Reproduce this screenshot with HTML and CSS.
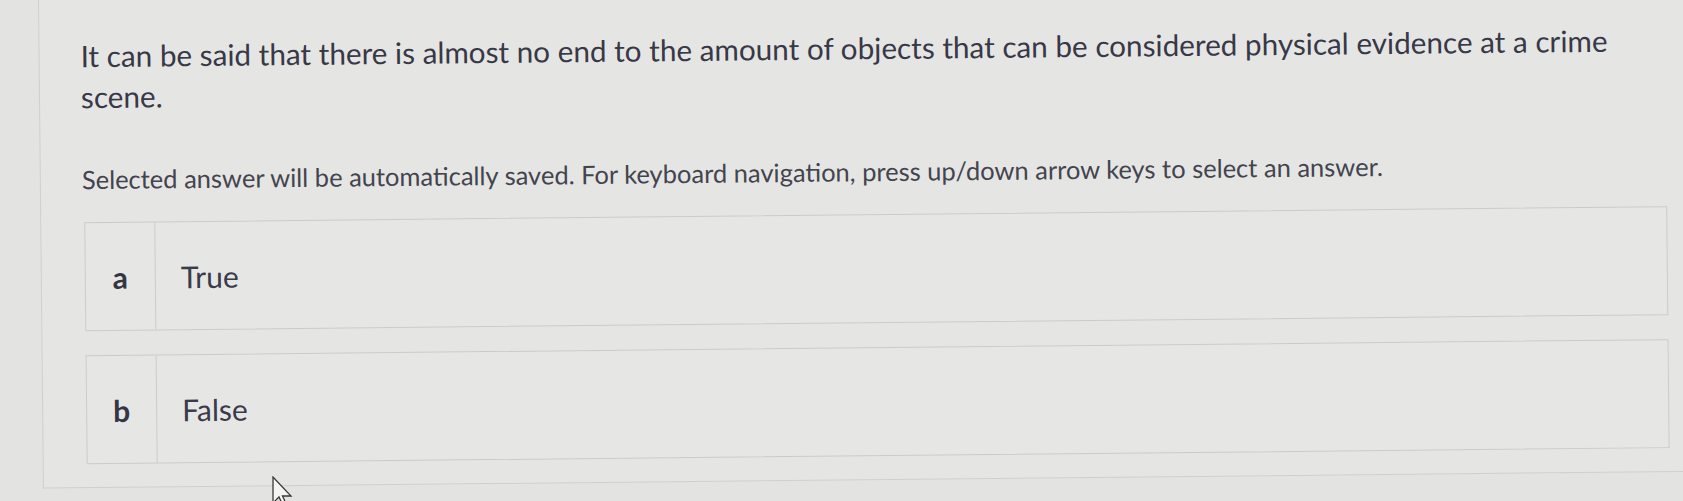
FILE: index.html
```html
<!DOCTYPE html>
<html lang="en">
<head>
<meta charset="utf-8">
<title>Question</title>
<link rel="stylesheet" href="styles.css">
</head>
<body>
<div class="stage">
  <div class="panel">
    <p class="question">It can be said that there is almost no end to the amount of objects that can be considered physical evidence at a crime scene.</p>
    <p class="hint">Selected answer will be automatically saved. For keyboard navigation, press up/down arrow keys to select an answer.</p>
    <div class="options">
      <div class="option">
        <div class="letter">a</div>
        <div class="answer">True</div>
      </div>
      <div class="option">
        <div class="letter">b</div>
        <div class="answer">False</div>
      </div>
    </div>
  </div>
</div>
<svg class="cursor" width="22" height="34" viewBox="0 0 22 34" xmlns="http://www.w3.org/2000/svg">
  <path d="M1 1 L1 27 L7 21 L11.5 31 L15 29.5 L10.5 20 L19 20 Z" fill="#f4f4f2" stroke="#3a3a3a" stroke-width="1.3" stroke-linejoin="miter"/>
</svg>
</body>
</html>
```
FILE: styles.css
```css
html, body {
  margin: 0;
  padding: 0;
}
body {
  width: 1683px;
  height: 501px;
  overflow: hidden;
  background: #e3e4e2;
  font-family: Lato, "Source Sans Pro", "Open Sans", sans-serif;
  color: #3b3b48;
  position: relative;
}
.stage {
  transform: rotate(-0.58deg);
  transform-origin: 0 0;
  padding-left: 38px;
}
.panel {
  width: 1720px;
  border-left: 1px solid #cfd0ce;
  border-bottom: 1px solid #cfd0ce;
  padding: 36px 0 23px 41px;
  background: #e5e6e4;
}
.question {
  margin: 0;
  width: 1545px;
  font-size: 29.7px;
  line-height: 41px;
  color: #383847;
}
.hint {
  margin: 46px 0 0 0;
  font-size: 25.5px;
  line-height: 32px;
  color: #44444e;
}
.options {
  margin-top: 27px;
  margin-left: 2px;
  width: 1583px;
  display: flex;
  flex-direction: column;
  gap: 24px;
}
.option {
  display: flex;
  height: 107px;
  border: 1px solid #cbccca;
  background: #e6e7e5;
}
.letter {
  width: 69px;
  border-right: 1px solid #cbccca;
  display: flex;
  align-items: center;
  justify-content: center;
  font-size: 30px;
  font-weight: 700;
  color: #353544;
}
.answer {
  display: flex;
  align-items: center;
  padding-left: 25px;
  font-size: 30px;
  color: #3a3a4b;
}
.cursor {
  position: absolute;
  left: 272px;
  top: 476px;
}
```
